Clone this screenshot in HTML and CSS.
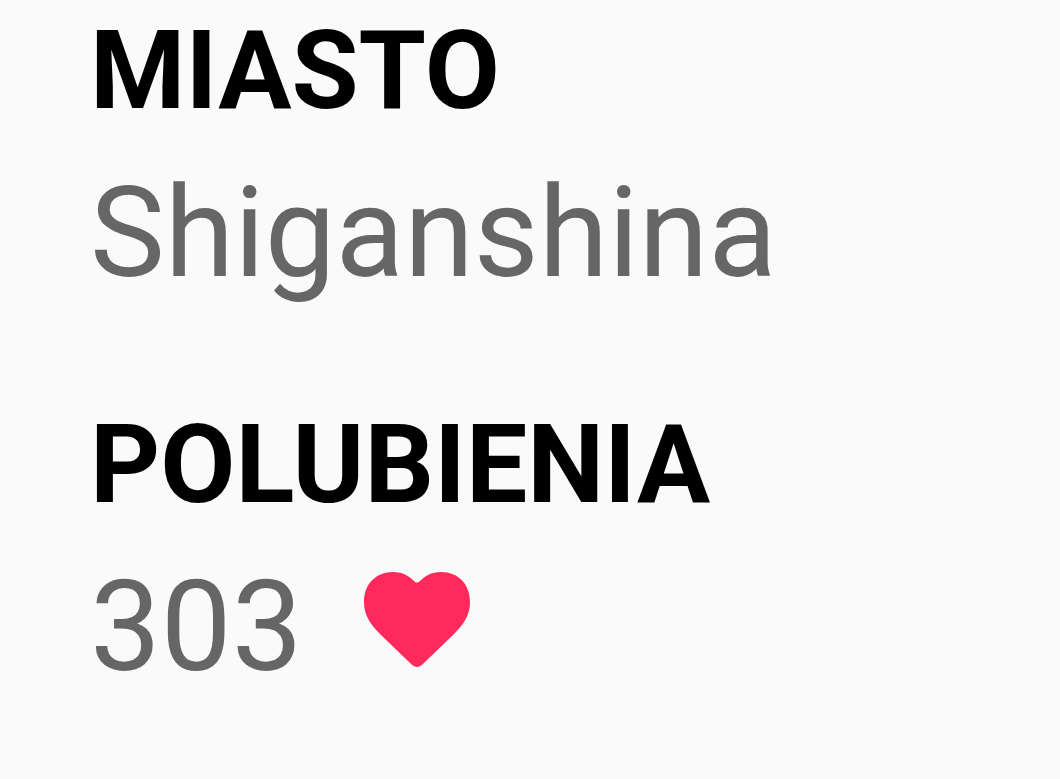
FILE: index.html
```html
<!DOCTYPE html>
<html lang="pl">

<head>
    <meta charset="UTF-8">
    <meta name="viewport" content="width=device-width, initial-scale=1.0">
    <title>Profil</title>
    <link rel="stylesheet" href="styles.css">
</head>

<body>
    <dl class="profile">
        <div class="profile-item">
            <dt class="label">MIASTO</dt>
            <dd class="value">Shiganshina</dd>
        </div>
        <div class="profile-item">
            <dt class="label">POLUBIENIA</dt>
            <dd class="value">
                <span>303</span>
                <svg class="heart" viewBox="0 0 106 98" aria-hidden="true">
                    <path d="M53 95C50 95 47 92 44 89L17 63C6 52 0 43 0 30C0 12 12 0 29 0C39 0 45 4 50 9Q53 12 56 9C61 4 67 0 77 0C94 0 106 12 106 30C106 43 100 52 89 63L62 89C59 92 56 95 53 95Z"/>
                </svg>
            </dd>
        </div>
    </dl>
</body>

</html>
```

FILE: styles.css
```css
body {
    margin: 0;
    background: #fafafa;
    font-family: Roboto, "Liberation Sans", sans-serif;
}

.profile {
    display: flex;
    flex-direction: column;
    gap: 88px;
    margin: 0;
    padding: 7px 90px;
}

.label {
    font-size: 109px;
    font-weight: 700;
    line-height: 128px;
    color: #000;
}

.value {
    display: flex;
    align-items: baseline;
    gap: 62px;
    margin: 0;
    padding-top: 18px;
    font-size: 126px;
    line-height: 160px;
    color: #666;
}

.heart {
    width: 106px;
    height: 98px;
    fill: #ff2a5b;
}
```
